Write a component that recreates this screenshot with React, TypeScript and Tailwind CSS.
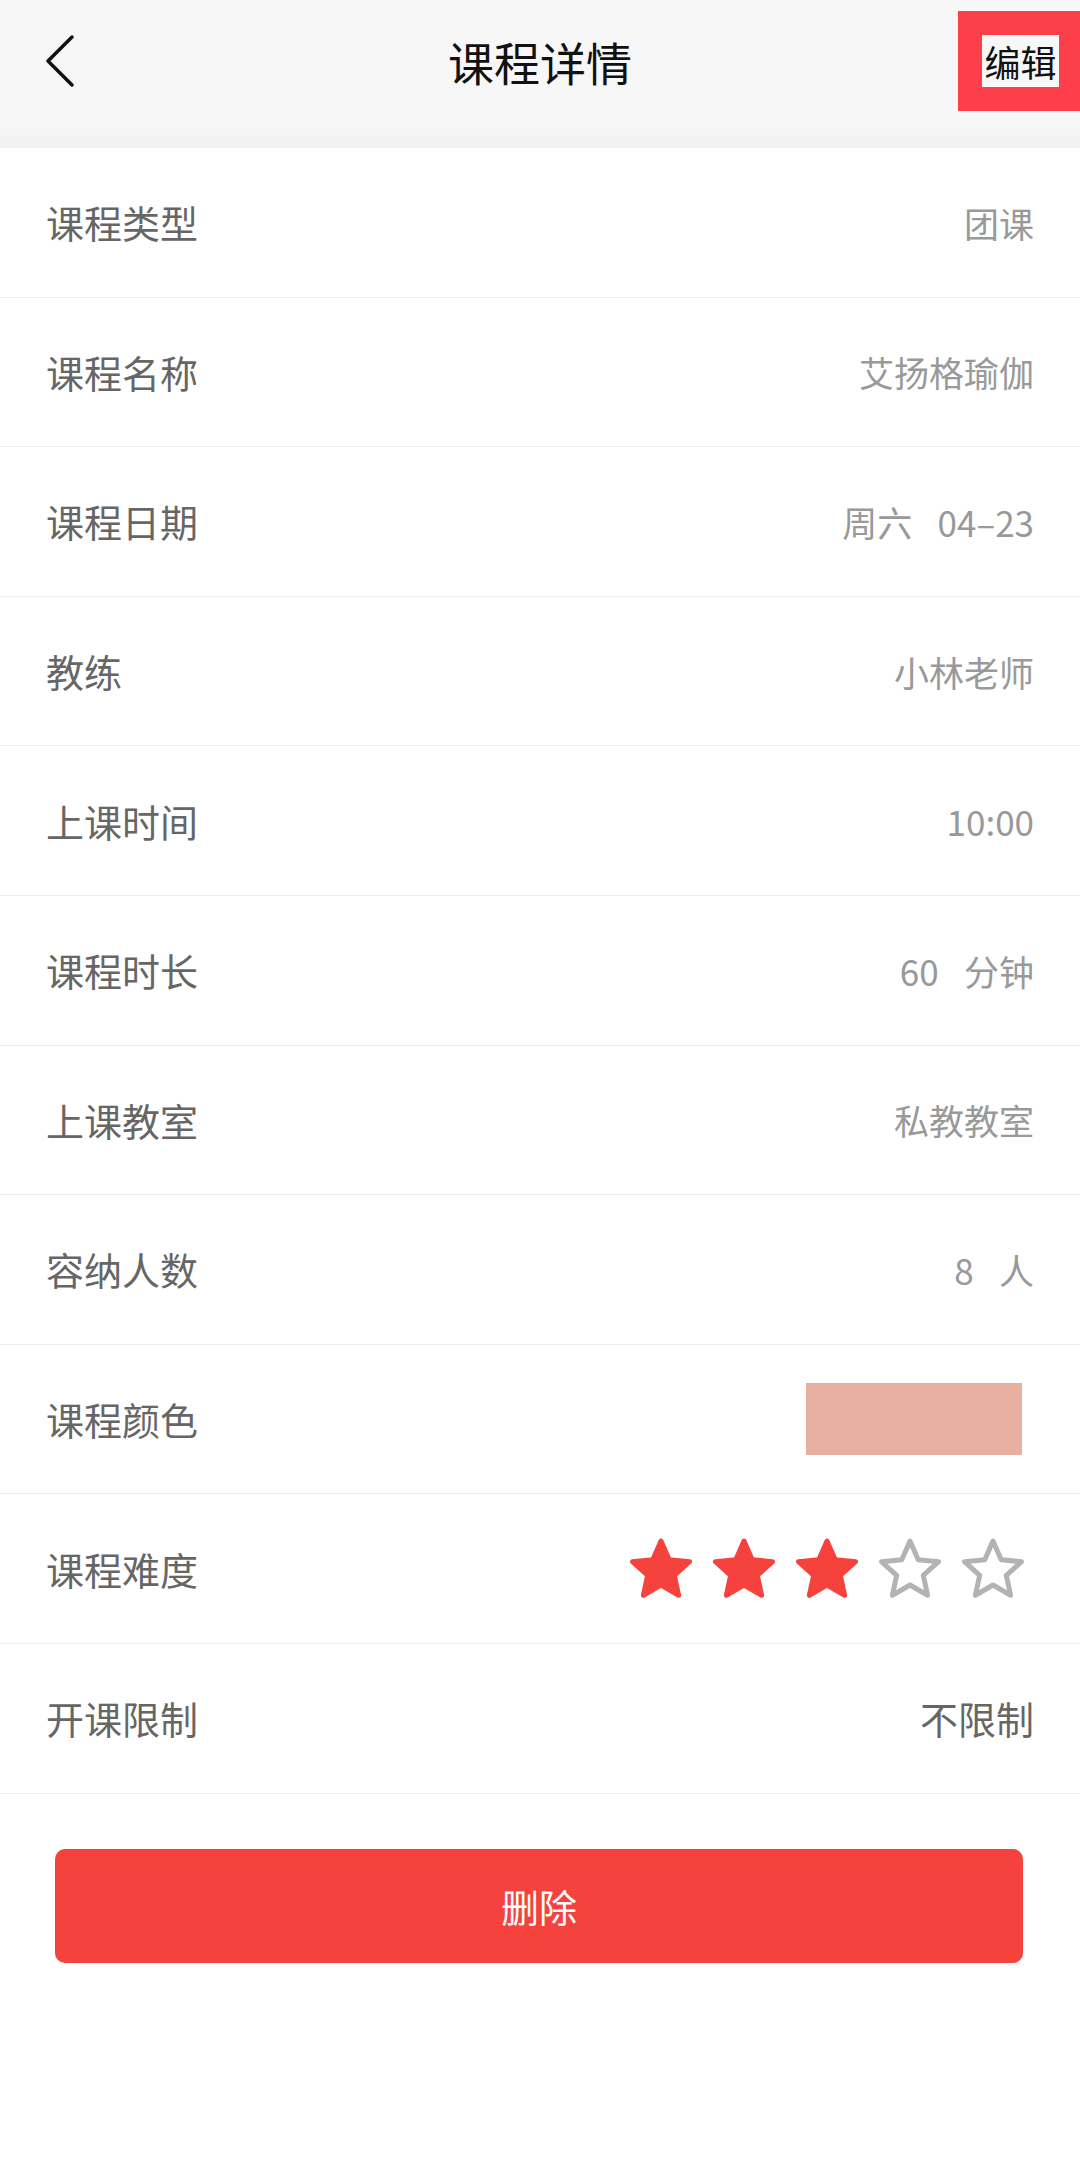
import React from 'react';

const rows: { label: string; value?: string; dark?: boolean; kind?: 'color' | 'stars' }[] = [
  { label: '课程类型', value: '团课' },
  { label: '课程名称', value: '艾扬格瑜伽' },
  { label: '课程日期', value: '周六\u2002 04–23' },
  { label: '教练', value: '小林老师' },
  { label: '上课时间', value: '10:00' },
  { label: '课程时长', value: '60\u2002 分钟' },
  { label: '上课教室', value: '私教教室' },
  { label: '容纳人数', value: '8\u2002 人' },
  { label: '课程颜色', kind: 'color' },
  { label: '课程难度', kind: 'stars' },
  { label: '开课限制', value: '不限制', dark: true },
];

function Star({ filled }: { filled: boolean }) {
  // five point star, rounded corners via stroke joins
  const pts: string[] = [];
  for (let i = 0; i < 10; i++) {
    const r = i % 2 === 0 ? 30 : 14;
    const a = (Math.PI / 5) * i - Math.PI / 2;
    pts.push(`${(33 + r * Math.cos(a)).toFixed(2)},${(35 + r * Math.sin(a)).toFixed(2)}`);
  }
  return (
    <svg width="66" height="66" viewBox="0 0 66 66">
      <polygon
        points={pts.join(' ')}
        fill={filled ? '#f6423d' : 'none'}
        stroke={filled ? '#f6423d' : '#b3b3b3'}
        strokeWidth="5"
        strokeLinejoin="round"
      />
    </svg>
  );
}

export default function App() {
  return (
    <div
      className="min-h-[2167px] w-[1080px] bg-white"
      style={{ fontFamily: '"Noto Sans CJK SC", "Noto Sans", sans-serif' }}
    >
      <header className="bg-[#f7f7f7]">
        <div className="grid h-[122px] grid-cols-[1fr_auto_1fr] items-center">
          <div className="pl-[44px]">
            <svg width="32" height="54" viewBox="0 0 32 54">
              <polyline
                points="28,3 4,27 28,51"
                fill="none"
                stroke="#111"
                strokeWidth="3.5"
                strokeLinecap="round"
                strokeLinejoin="round"
              />
            </svg>
          </div>
          <h1 className="text-[46px] leading-none text-[#111]">课程详情</h1>
          <div className="flex justify-end">
            <div className="flex h-[100px] w-[122px] items-center bg-[#fc3f4a] pl-[24px]">
              <span className="flex h-[52px] w-[77px] items-center justify-center bg-[#f7f7f7] text-[36px] leading-none text-[#111]">
                编辑
              </span>
            </div>
          </div>
        </div>
        <div className="h-[26px] bg-gradient-to-b from-[#f7f7f7] to-[#f1f1f1]" />
      </header>

      <main>
        {rows.map((row) => (
          <div
            key={row.label}
            className="flex h-[149.6px] items-center justify-between border-b border-[#ececec] pl-[46px] pr-[46px]"
          >
            <span className="text-[38px] leading-none text-[#666]">{row.label}</span>
            {row.kind === 'color' ? (
              <div className="mr-[12px] h-[72px] w-[216px] bg-[#e8b0a0]" />
            ) : row.kind === 'stars' ? (
              <div className="mr-[8px] flex gap-[17px]">
                {[0, 1, 2, 3, 4].map((i) => (
                  <Star key={i} filled={i < 3} />
                ))}
              </div>
            ) : (
              <span
                className={
                  row.dark
                    ? 'whitespace-pre text-[38px] leading-none text-[#666]'
                    : 'whitespace-pre text-[35px] leading-none text-[#999]'
                }
              >
                {row.value}
              </span>
            )}
          </div>
        ))}

        <div className="pl-[55px] pr-[57px] pt-[55px]">
          <button className="flex h-[114px] w-full items-center justify-center rounded-[10px] bg-[#f6423d] text-[38px] text-white">
            删除
          </button>
        </div>
      </main>
    </div>
  );
}
